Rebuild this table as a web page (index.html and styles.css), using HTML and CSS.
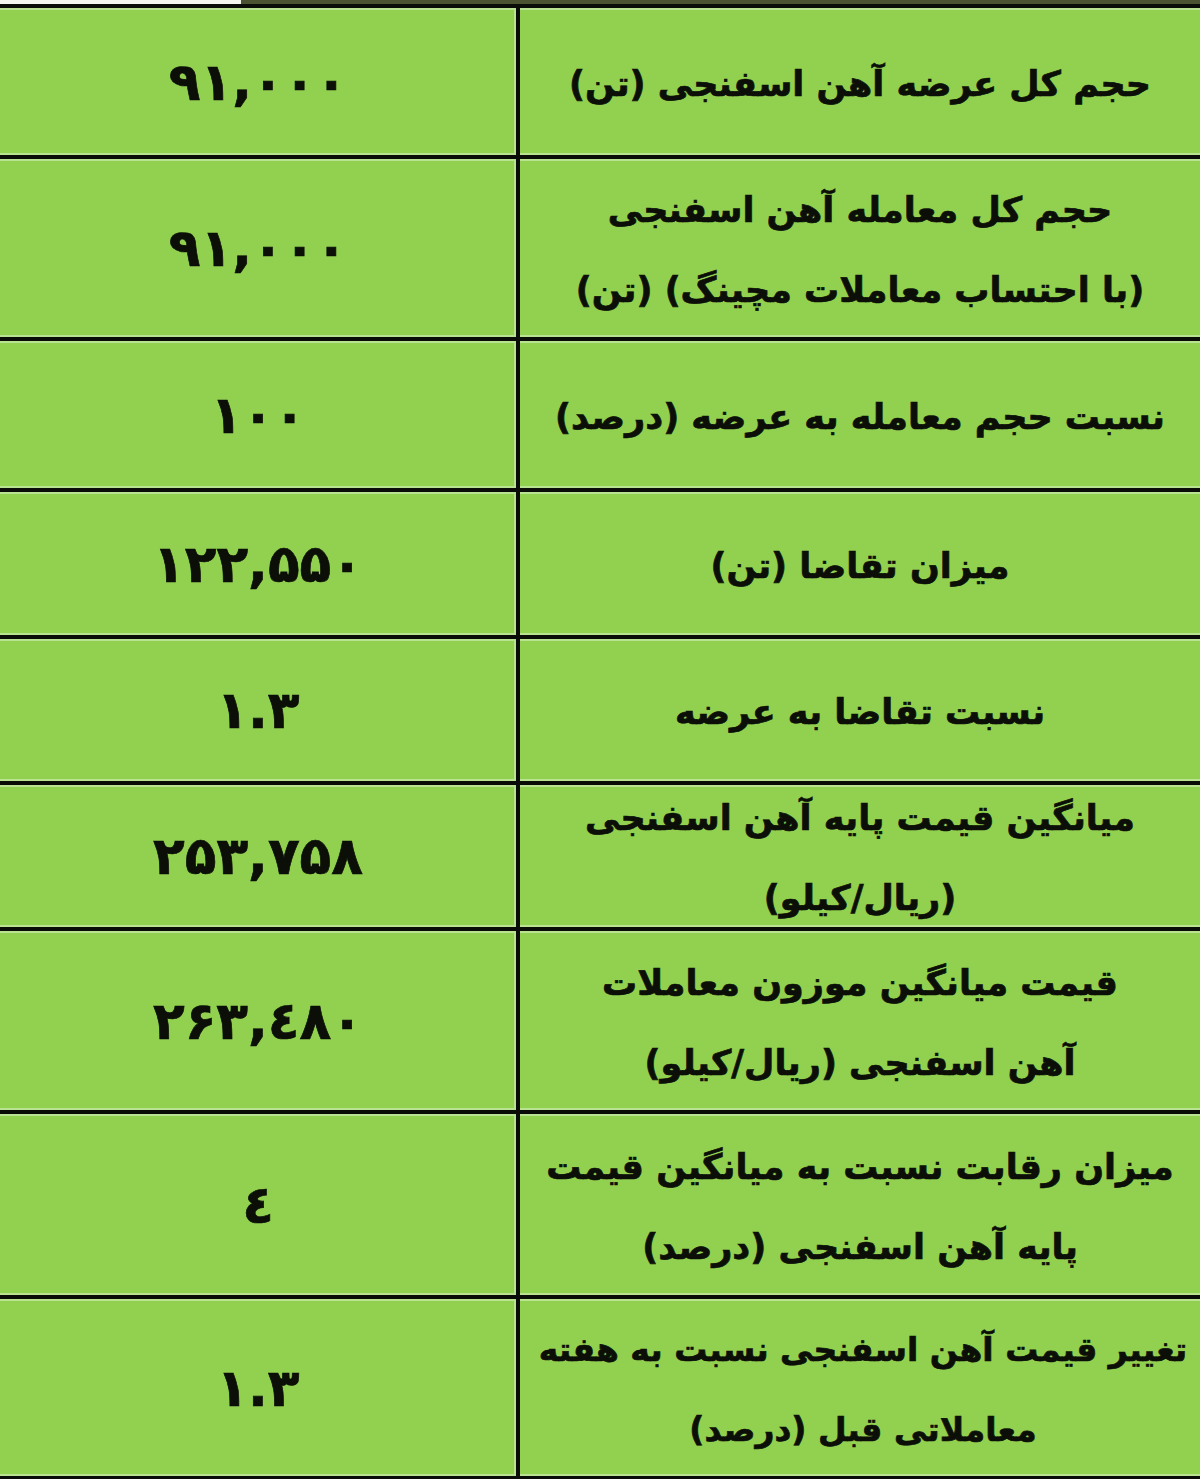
FILE: index.html
```html
<!DOCTYPE html>
<html lang="fa">
<head>
<meta charset="utf-8">
<title>آهن اسفنجی</title>
<link rel="stylesheet" href="styles.css">
</head>
<body>
<div class="topstrip"><div class="strip-dark"></div><div class="strip-light"></div></div>
<div class="sheet" dir="rtl">
  <div class="cell label">حجم کل عرضه آهن اسفنجی (تن)</div>
  <div class="cell value">۹۱,۰۰۰</div>

  <div class="cell label">حجم کل معامله آهن اسفنجی<br>(با احتساب معاملات مچینگ) (تن)</div>
  <div class="cell value">۹۱,۰۰۰</div>

  <div class="cell label">نسبت حجم معامله به عرضه (درصد)</div>
  <div class="cell value">۱۰۰</div>

  <div class="cell label">میزان تقاضا (تن)</div>
  <div class="cell value">۱۲۲,۵۵۰</div>

  <div class="cell label">نسبت تقاضا به عرضه</div>
  <div class="cell value">۱.۳</div>

  <div class="cell label">میانگین قیمت پایه آهن اسفنجی<br>(ریال/کیلو)</div>
  <div class="cell value">۲۵۳,۷۵۸</div>

  <div class="cell label">قیمت میانگین موزون معاملات<br>آهن اسفنجی (ریال/کیلو)</div>
  <div class="cell value">۲۶۳,٤۸۰</div>

  <div class="cell label">میزان رقابت نسبت به میانگین قیمت<br>پایه آهن اسفنجی (درصد)</div>
  <div class="cell value">٤</div>

  <div class="cell label label-tight">تغییر قیمت آهن اسفنجی نسبت به هفته<br>معاملاتی قبل (درصد)</div>
  <div class="cell value">۱.۳</div>
</div>
</body>
</html>
```

FILE: styles.css
```css
html, body {
  margin: 0;
  padding: 0;
  background: #92d050;
}

body {
  width: 1200px;
  font-family: "DejaVu Sans", "Noto Sans", sans-serif;
  color: #0b0f08;
}

.topstrip {
  display: flex;
  flex-direction: row-reverse;
  height: 4px;
}

.strip-light {
  width: 241px;
  background: #f4f6ee;
}

.strip-dark {
  flex: 1;
  background: #4a5232;
}

.sheet {
  display: grid;
  grid-template-columns: 680px 520px;
  grid-template-rows: 151px 182px 151px 147px 146px 146px 183px 185px 181px;
  border-top: 4px solid #0a0c08;
}

.cell {
  display: flex;
  align-items: center;
  justify-content: center;
  text-align: center;
  white-space: nowrap;
  border-bottom: 4px solid #0a0c08;
  box-shadow: inset 0 -2px 0 #b9e391, inset 0 2px 0 #b9e391;
  -webkit-text-stroke: 0.7px #0b0f08;
}

.label {
  font-weight: bold;
  font-size: 35px;
  line-height: 80px;
  padding: 4px 0 0;
}

.label-tight {
  font-size: 33px;
  padding-left: 6px;
}

.value {
  direction: ltr;
  font-weight: bold;
  font-size: 52px;
  border-right: 4px solid #0a0c08;
  box-shadow: inset 0 -2px 0 #b9e391, inset 0 2px 0 #b9e391, inset -2px 0 0 #b9e391;
}
```
